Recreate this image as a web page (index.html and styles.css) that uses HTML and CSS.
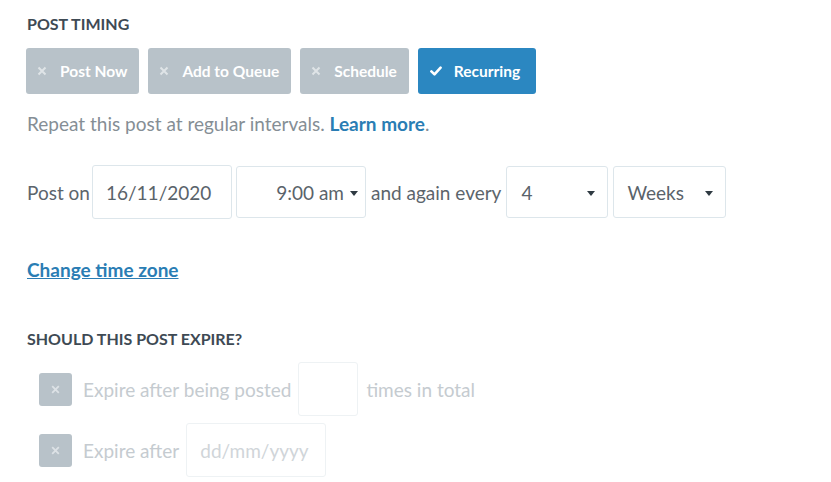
FILE: index.html
```html
<!DOCTYPE html>
<html>
<head>
<meta charset="utf-8">
<link rel="stylesheet" href="styles.css">
</head>
<body>
<div class="page">
  <h3 class="heading">POST TIMING</h3>
  <div class="btns">
    <button class="btn"><svg class="x" width="10" height="10" viewBox="0 0 10 10"><path d="M1.5 1.5 L8.5 8.5 M8.5 1.5 L1.5 8.5" stroke="#dfe4e7" stroke-width="2"/></svg>Post Now</button>
    <button class="btn"><svg class="x" width="10" height="10" viewBox="0 0 10 10"><path d="M1.5 1.5 L8.5 8.5 M8.5 1.5 L1.5 8.5" stroke="#dfe4e7" stroke-width="2"/></svg>Add to Queue</button>
    <button class="btn"><svg class="x" width="10" height="10" viewBox="0 0 10 10"><path d="M1.5 1.5 L8.5 8.5 M8.5 1.5 L1.5 8.5" stroke="#dfe4e7" stroke-width="2"/></svg>Schedule</button>
    <button class="btn active"><svg class="check" width="12" height="10" viewBox="0 0 12 10"><path d="M1.4 5.4 L4.5 8.4 L10.6 1.6" fill="none" stroke="#fff" stroke-width="2.6" stroke-linecap="round" stroke-linejoin="round"/></svg>Recurring</button>
  </div>
  <p class="help">Repeat this post at regular intervals. <a class="learn">Learn more</a>.</p>
  <div class="row">
    <span class="lbl">Post on</span>
    <div class="field date">16/11/2020</div>
    <div class="field time">9:00 am<span class="caret"></span></div>
    <span class="lbl again">and again every</span>
    <div class="field num">4<span class="caret"></span></div>
    <div class="field unit">Weeks<span class="caret"></span></div>
  </div>
  <a class="tz">Change time zone</a>
  <h3 class="heading h2">SHOULD THIS POST EXPIRE?</h3>
  <div class="exp first">
    <span class="cb"><svg width="9" height="9" viewBox="0 0 9 9"><path d="M1.2 1.2 L7.8 7.8 M7.8 1.2 L1.2 7.8" stroke="#dde2e6" stroke-width="1.8"/></svg></span>
    <span class="dim">Expire after being posted</span>
    <div class="field small"></div>
    <span class="dim after">times in total</span>
  </div>
  <div class="exp second">
    <span class="cb"><svg width="9" height="9" viewBox="0 0 9 9"><path d="M1.2 1.2 L7.8 7.8 M7.8 1.2 L1.2 7.8" stroke="#dde2e6" stroke-width="1.8"/></svg></span>
    <span class="dim">Expire after</span>
    <div class="field dd">dd/mm/yyyy</div>
  </div>
</div>
</body>
</html>
```
FILE: styles.css
```css
html, body { margin: 0; padding: 0; background: #fff; }
body { font-family: Lato, "Noto Sans", sans-serif; color: #5d676f; }
.page { padding: 14px 26px 0 27px; }
.heading { margin: 0; font-size: 16px; font-weight: 700; color: #3e4a54; line-height: 20px; }
.btns { display: flex; gap: 9px; margin-top: 14px; margin-left: -1px; }
.btn { border: 0; border-radius: 3px; background: #b8c2c9; color: #fff; font-family: inherit; font-weight: 700; font-size: 15.5px; height: 46px; padding: 0 12px 0 11px; display: flex; align-items: center; }
.btn .x { margin-right: 13px; }
.btn.active { background: #2b87c1; padding: 0 16px 0 12px; }
.check { margin-right: 12px; }
.help { margin: 18px 0 0; font-size: 19px; color: #858e95; line-height: 24px; }
.learn { color: #2a7db4; font-weight: 700; }
.row { display: flex; align-items: center; margin-top: 29px; font-size: 19px; color: #5c656c; }
.lbl { white-space: nowrap; }
.field { border: 1px solid #dde6eb; border-radius: 3px; box-sizing: border-box; height: 52px; display: flex; align-items: center; font-size: 19px; color: #5a636a; position: relative; }
.date { width: 140px; padding-left: 13px; margin-left: 2px; height: 54px; }
.time { width: 130px; justify-content: flex-end; padding-right: 21px; margin-left: 4px; }
.again { margin-left: 5px; }
.num { width: 102px; padding-left: 14px; margin-left: 5px; }
.unit { width: 113px; padding-left: 13px; margin-left: 5px; }
.caret { position: absolute; right: 7px; top: 24px; width: 0; height: 0; border-left: 4px solid transparent; border-right: 4px solid transparent; border-top: 5px solid #2f3a42; }
.num .caret, .unit .caret { right: 12px; }
.tz { display: block; margin-top: 39px; font-size: 19px; line-height: 24px; font-weight: 700; color: #2a7db4; text-decoration: underline; width: max-content; }
.h2 { margin-top: 47px; }
.exp { display: flex; align-items: center; margin-left: 12px; font-size: 19px; }
.first { margin-top: 13px; }
.second { margin-top: 7px; }
.cb { width: 33px; height: 33px; border-radius: 3px; background: #b8c2c9; display: flex; align-items: center; justify-content: center; }
.dim { color: #c5cbd0; margin-left: 11px; }
.small { width: 60px; height: 54px; margin-left: 7px; border-color: #eef2f4; }
.after { margin-left: 8px; }
.dd { width: 140px; height: 54px; margin-left: 7px; padding-left: 13px; color: #d0d5d9; border-color: #eef2f4; }
```
